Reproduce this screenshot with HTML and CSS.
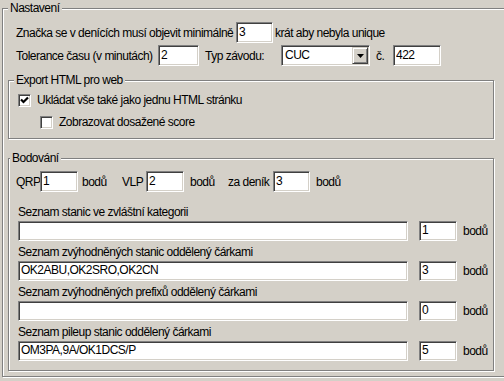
FILE: index.html
```html
<!DOCTYPE html>
<html lang="cs">
<head>
    <meta charset="UTF-8">
    <title>Nastavení</title>
    <link rel="stylesheet" href="styles.css">
</head>
<body>
    <fieldset class="group settings">
        <legend>Nastavení</legend>

        <div class="line first-line">
            <span class="cap cap-minimum">Značka se v denících musí objevit minimálně</span>
            <input class="edit w37" type="text" value="3">
            <span class="after">krát aby nebyla unique</span>
        </div>

        <div class="line">
            <span class="cap cap-tolerance">Tolerance času (v minutách)</span>
            <input class="edit w41" type="text" value="2">
            <span class="cap cap-type">Typ závodu:</span>
            <div class="combo">
                <span class="combo-text">CUC</span>
                <span class="combo-btn">
                    <svg width="7" height="4" viewBox="0 0 7 4"><polygon points="0,0 7,0 3.5,4" fill="#000"/></svg>
                </span>
            </div>
            <span class="cap cap-no">č.</span>
            <input class="edit w48" type="text" value="422">
        </div>

        <!-- Export -->
        <fieldset class="group export">
            <legend>Export HTML pro web</legend>
            <div class="check-line">
                <span class="check">
                    <svg width="9" height="9" viewBox="0 0 9 9"><path d="M1 3.5 L3.5 6 L8 1.5" fill="none" stroke="#000" stroke-width="2.2"/></svg>
                </span>
                <span>Ukládat vše také jako jednu HTML stránku</span>
            </div>
            <div class="check-line sub">
                <span class="check"></span>
                <span>Zobrazovat dosažené score</span>
            </div>
        </fieldset>

        <!-- Scoring -->
        <fieldset class="group scoring">
            <legend>Bodování</legend>
            <div class="line points-line">
                <span class="cap cap-qrp">QRP</span>
                <input class="edit w38" type="text" value="1">
                <span class="cap unit-a">bodů</span>
                <span class="cap cap-vlp">VLP</span>
                <input class="edit w38" type="text" value="2">
                <span class="cap unit-b">bodů</span>
                <span class="cap cap-log">za deník</span>
                <input class="edit w37" type="text" value="3">
                <span class="cap unit-c">bodů</span>
            </div>

            <div class="list">
                <div class="list-cap list-first">Seznam stanic ve zvláštní kategorii</div>
                <div class="list-row">
                    <input class="edit wide" type="text" value="">
                    <input class="edit pts" type="text" value="1">
                    <span class="unit">bodů</span>
                </div>

                <div class="list-cap">Seznam zvýhodněných stanic oddělený čárkami</div>
                <div class="list-row">
                    <input class="edit wide" type="text" value="OK2ABU,OK2SRO,OK2CN">
                    <input class="edit pts" type="text" value="3">
                    <span class="unit">bodů</span>
                </div>

                <div class="list-cap">Seznam zvýhodněných prefixů oddělený čárkami</div>
                <div class="list-row">
                    <input class="edit wide" type="text" value="">
                    <input class="edit pts" type="text" value="0">
                    <span class="unit">bodů</span>
                </div>

                <div class="list-cap">Seznam pileup stanic oddělený čárkami</div>
                <div class="list-row">
                    <input class="edit wide" type="text" value="OM3PA,9A/OK1DCS/P">
                    <input class="edit pts" type="text" value="5">
                    <span class="unit">bodů</span>
                </div>
            </div>
        </fieldset>
    </fieldset>
</body>
</html>
```

FILE: styles.css
```css
body {
    margin: 0;
    width: 504px;
    height: 381px;
    overflow: hidden;
    background-color: #d4d0c8;
    color: #000;
    font-family: "Liberation Sans", Arial, sans-serif;
    font-size: 12px;
    line-height: 14px;
    letter-spacing: -0.5px;
}

/* etched group box */
.group {
    margin: 0;
    min-width: 0;
    box-sizing: border-box;
    border: 1px solid #808080;
    box-shadow: inset 1px 1px #fff, 1px 1px #fff;
}

.group > legend {
    padding: 0 2px;
    line-height: 14px;
    background-color: #d4d0c8;
}

.settings {
    margin: 1px 0 0 2px;
    width: 540px;
    padding: 0 0 5px 5px;
}

.line {
    display: flex;
    align-items: center;
    height: 21px;
    padding-left: 8px;
    white-space: nowrap;
}

.line > * {
    flex-shrink: 0;
}

.first-line {
    margin-top: 7px;
    margin-bottom: 2px;
}

.cap {
    display: inline-block;
}

.cap-minimum { width: 220px; }
.cap-tolerance { width: 142px; }
.cap-type { width: 76px; margin-left: 6px; }
.cap-no { width: 17px; margin-left: 6px; }
.after { margin-left: 2px; }

/* sunken edit box */
.edit {
    box-sizing: border-box;
    height: 21px;
    margin: 0;
    padding: 0 2px 2px;
    border: 1px solid;
    border-color: #808080 #fff #fff #808080;
    box-shadow: inset 1px 1px #404040, inset -1px -1px #d4d0c8;
    background: #fff;
    font: inherit;
    letter-spacing: inherit;
    color: #000;
    outline: none;
}

.w37 { width: 37px; }
.w38 { width: 38px; }
.w41 { width: 41px; }
.w48 { width: 48px; }

.combo {
    box-sizing: border-box;
    display: flex;
    align-items: center;
    width: 89px;
    height: 21px;
    padding: 1px;
    border: 1px solid;
    border-color: #808080 #fff #fff #808080;
    box-shadow: inset 1px 1px #404040, inset -1px -1px #d4d0c8;
    background: #fff;
}

.combo-text {
    flex: 1;
    padding: 0 0 2px 2px;
}

.combo-btn {
    box-sizing: border-box;
    display: flex;
    align-items: center;
    justify-content: center;
    width: 16px;
    height: 17px;
    border: 1px solid;
    border-color: #d4d0c8 #404040 #404040 #d4d0c8;
    box-shadow: inset 1px 1px #fff, inset -1px -1px #808080;
    background: #d4d0c8;
}

.export {
    margin-top: 7px;
    width: 486px;
    padding: 2px 0 5px 5px;
}

.check-line {
    display: flex;
    align-items: center;
    height: 22px;
    padding-left: 4px;
}

.check-line.sub {
    padding-left: 26px;
}

.check {
    box-sizing: border-box;
    display: flex;
    align-items: center;
    justify-content: center;
    width: 13px;
    height: 13px;
    margin-right: 6px;
    border: 1px solid;
    border-color: #808080 #fff #fff #808080;
    box-shadow: inset 1px 1px #404040, inset -1px -1px #d4d0c8;
    background: #fff;
}

.scoring {
    margin-top: 12px;
    width: 486px;
    padding: 0 0 9px 1px;
}

.points-line {
    margin-top: 6px;
    padding-left: 6px;
}

.cap-qrp { width: 24px; }
.unit-a { width: 40px; margin-left: 4px; }
.cap-vlp { width: 24px; }
.unit-b { width: 38px; margin-left: 6px; }
.cap-log { width: 45px; }
.unit-c { margin-left: 6px; }

.list {
    padding-left: 8px;
}

.list-cap {
    height: 17px;
    padding-top: 3px;
    line-height: 17px;
}

.list-first {
    margin-top: 9px;
}

.list-row {
    display: flex;
    align-items: center;
    height: 20px;
}

.list-row .edit {
    height: 20px;
}

.wide { width: 390px; }

.pts {
    width: 38px;
    margin-left: 11px !important;
}

.unit {
    margin-left: 6px;
}
```
